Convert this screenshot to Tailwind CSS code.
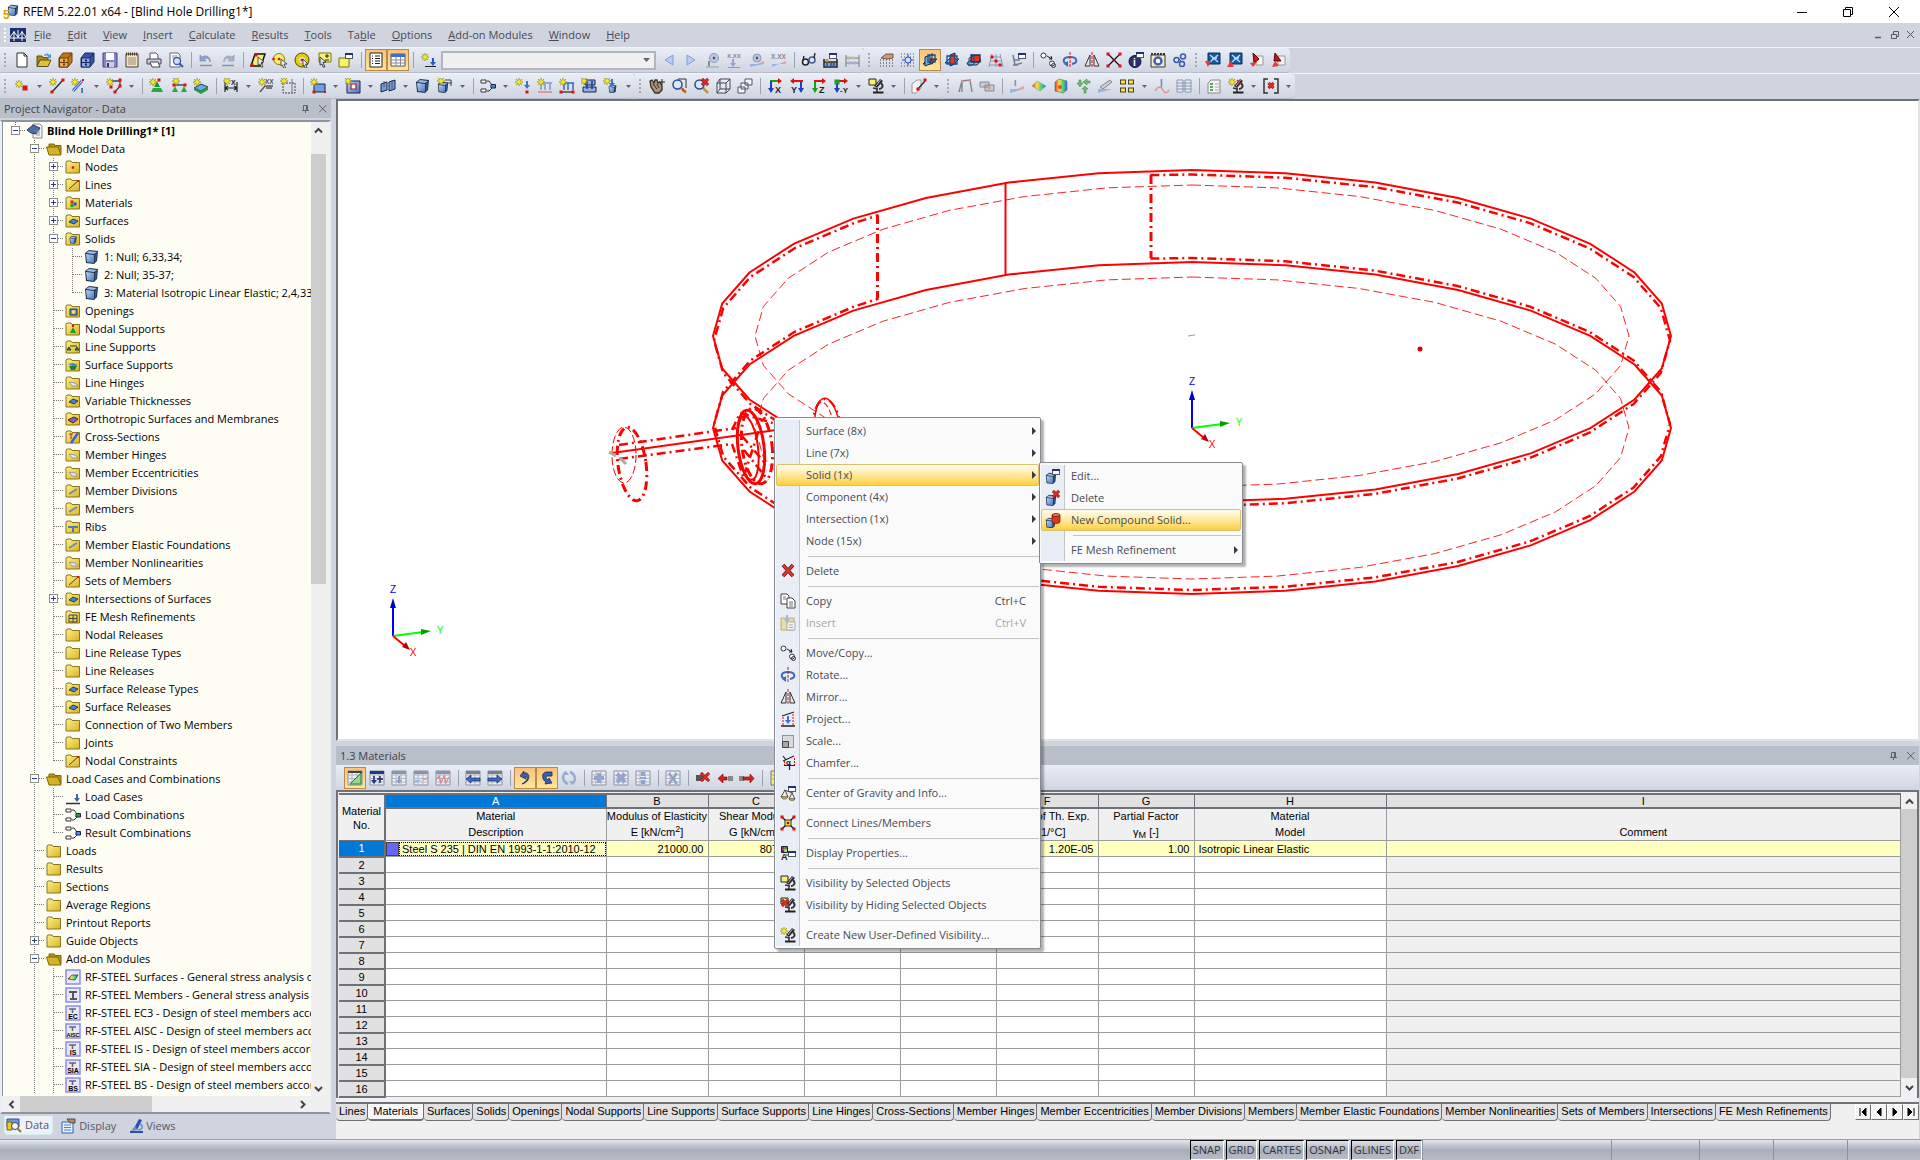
<!DOCTYPE html>
<html lang="en">
<head>
  <meta charset="UTF-8" />
  <meta name="viewport" content="width=device-width, initial-scale=1.0" />
  <title>RFEM 5.22.01 x64 - [Blind Hole Drilling1*]</title>
  <script src="https://cdn.jsdelivr.net/npm/@tailwindcss/browser@4"></script>
</head>
<body class="h-screen flex flex-col overflow-hidden bg-[#cfd4de] font-['Open_Sans',sans-serif] text-[11px] leading-4 text-[#3f434c] cursor-default">

  <!-- shared gradients -->
  <svg class="absolute size-0" aria-hidden="true">
    <defs>
      <linearGradient id="gFolder" x1="0" y1="0" x2="1" y2="1"><stop offset="0" stop-color="#fff08a" /><stop offset="1" stop-color="#d9b422" /></linearGradient>
      <linearGradient id="gBlue" x1="0" y1="0" x2="1" y2="1"><stop offset="0" stop-color="#b9d2f5" /><stop offset="1" stop-color="#4a78bd" /></linearGradient>
      <linearGradient id="gGrey" x1="0" y1="0" x2="1" y2="1"><stop offset="0" stop-color="#ffffff" /><stop offset="1" stop-color="#a9abb5" /></linearGradient>
      <linearGradient id="gHeat" x1="0" y1="0" x2="1" y2="0"><stop offset="0" stop-color="#e33" /><stop offset=".35" stop-color="#fd4" /><stop offset=".65" stop-color="#4d6" /><stop offset="1" stop-color="#36e" /></linearGradient>
    </defs>
  </svg>

  <!-- === TITLE BAR === -->
  <header class="h-[23px] shrink-0 bg-white flex items-center px-[3px] text-[12px] text-black">
    <span data-icon="app" class="flex"></span>
    <h1 class="ml-1 flex-1 text-[12px] font-normal whitespace-nowrap" id="window-title">RFEM 5.22.01 x64 - [Blind Hole Drilling1*]</h1>
    <div class="flex">
      <button aria-label="Minimize" class="w-[46px] h-[22px] flex items-center justify-center"><svg viewBox="0 0 10 10" class="size-[10px]"><path d="M0 5.5H10" stroke="#000" /></svg></button>
      <button aria-label="Restore" class="w-[46px] h-[22px] flex items-center justify-center"><svg viewBox="0 0 10 10" class="size-[10px]"><path d="M.5 2.5H7.5V9.5H.5ZM2.5 2V.5H9.5V7.5H8" fill="none" stroke="#000" /></svg></button>
      <button aria-label="Close" class="w-[46px] h-[22px] flex items-center justify-center"><svg viewBox="0 0 10 10" class="size-[10px]"><path d="M0 0L10 10M10 0L0 10" stroke="#000" /></svg></button>
    </div>
  </header>

  <!-- === MENU BAR === -->
  <nav class="h-6 shrink-0 flex items-center pl-1" aria-label="Main menu">
    <svg viewBox="0 0 3 14" class="w-[3px] h-[14px]"><path d="M1 0V14" stroke="#fff" stroke-width="2" stroke-dasharray="2 2" /></svg>
    <span data-icon="mdi" class="flex ml-[3px]"></span>
    <div id="menubar" class="flex flex-1"></div>
    <div class="flex pr-px">
      <button aria-label="Minimize document" class="w-4 h-4 flex items-center justify-center"><svg viewBox="0 0 8 8" class="size-2"><path d="M0 6.5H6" stroke="#555a66" stroke-width="1.5" /></svg></button>
      <button aria-label="Restore document" class="w-4 h-4 flex items-center justify-center"><svg viewBox="0 0 8 8" class="size-2"><path d="M.5 3.5H5.5V7.5H.5ZM2.5 3V.5H7.5V5.5H6" fill="none" stroke="#555a66" /></svg></button>
      <button aria-label="Close document" class="w-4 h-4 flex items-center justify-center"><svg viewBox="0 0 8 8" class="size-2"><path d="M0 0L7 7M7 0L0 7" stroke="#555a66" /></svg></button>
    </div>
  </nav>

  <!-- === TOOLBARS === -->
  <div id="toolbar-1" class="h-[26px] shrink-0 flex border-t border-[#f1f3f8]"></div>
  <div id="toolbar-2" class="h-[26px] shrink-0 flex border-t border-[#f1f3f8]"></div>

  <!-- === WORK AREA === -->
  <main class="flex-1 min-h-0 flex">

    <!-- Project navigator -->
    <aside class="w-[332px] shrink-0 flex flex-col">
      <div class="h-[19px] shrink-0 bg-[#b9bfc9] flex items-center pl-1 mr-[1px]">
        <h2 class="flex-1">Project Navigator - Data</h2>
        <button aria-label="Pin" class="w-[17px] h-4 flex items-center justify-center"><svg viewBox="0 0 8 8" class="size-2"><path d="M1.5 5V.5H5.5V5M0 5.500H7M3.500 5V8M4.500 1V5" fill="none" stroke="#5c6270" /></svg></button>
        <button aria-label="Close" class="w-[17px] h-4 flex items-center justify-center"><svg viewBox="0 0 8 8" class="size-2"><path d="M0 0L7.500 7.500M7.500 0L0 7.500" stroke="#5c6270" /></svg></button>
      </div>
      <div class="flex-1 min-h-0 border-2 border-[#8f939c] border-l-[#e9edf6] border-r-[#e9edf6] bg-[#f0f0f0] flex flex-col mt-[2px] mr-[1px] mb-px">
        <div class="flex-1 min-h-0 flex">
          <ul id="tree" class="flex-1 min-w-0 overflow-hidden bg-[#fdfdf4] border-l border-[#8f939c] text-black pl-[3px]"></ul>
          <div class="w-[18px] shrink-0 flex flex-col bg-[#f0f0f0] pr-[3px]">
            <button aria-label="Scroll up" class="h-8 pt-1 flex justify-center"><svg viewBox="0 0 9 9" class="size-[9px]"><path d="M1 6.500L4.500 3L8 6.500" fill="none" stroke="#444" stroke-width="2" /></svg></button>
            <div class="h-[430px] bg-[#cdcdcd]"></div>
            <div class="flex-1"></div>
            <button aria-label="Scroll down" class="h-4 flex items-center justify-center"><svg viewBox="0 0 9 9" class="size-[9px]"><path d="M1 3L4.500 6.500L8 3" fill="none" stroke="#444" stroke-width="2" /></svg></button>
          </div>
        </div>
        <div class="h-4 shrink-0 flex pr-[18px]">
          <button aria-label="Scroll left" class="w-[18px] flex items-center justify-center"><svg viewBox="0 0 9 9" class="size-[9px]"><path d="M6.500 1L3 4.500L6.500 8" fill="none" stroke="#444" stroke-width="2" /></svg></button>
          <div class="w-[132px] bg-[#cdcdcd]"></div>
          <div class="flex-1"></div>
          <button aria-label="Scroll right" class="w-[18px] flex items-center justify-center"><svg viewBox="0 0 9 9" class="size-[9px]"><path d="M3 1L6.500 4.500L3 8" fill="none" stroke="#444" stroke-width="2" /></svg></button>
        </div>
      </div>
      <div class="h-6 shrink-0 flex items-start pl-1 pt-[1px] gap-1 text-[#555a66]">
        <button class="h-[19px] pl-[1px] pr-[3px] flex items-center gap-[3px] bg-[#eef1f6] border border-t-0 border-[#d5ecef] rounded-b"><span data-icon="tabData"></span>Data</button>
        <button class="h-[19px] px-[3px] flex items-center gap-[3px]"><span data-icon="tabDisplay"></span>Display</button>
        <button class="h-[19px] px-[3px] ml-[3px] flex items-center gap-[1px]"><span data-icon="tabViews"></span>Views</button>
      </div>
    </aside>

    <section class="flex-1 min-w-0 flex flex-col pl-1">
      <!-- Model view -->
      <div class="flex-1 min-h-0 bg-white border-2 border-[#6e7178] border-r-[#e3e3e3] border-b-[#e3e3e3] overflow-hidden">
        <svg id="model" class="w-full h-full" role="img" aria-label="Model view"></svg>
      </div>

      <!-- Materials table -->
      <div class="h-[393px] shrink-0 mt-[5px] flex flex-col bg-[#f0f0f0] mr-[1px]">
        <div class="h-[19px] shrink-0 bg-[#b9bfc9] flex items-center pl-1">
          <h2 class="flex-1">1.3 Materials</h2>
          <button aria-label="Pin table" class="w-[17px] h-4 flex items-center justify-center"><svg viewBox="0 0 8 8" class="size-2"><path d="M1.5 5V.5H5.5V5M0 5.500H7M3.500 5V8M4.500 1V5" fill="none" stroke="#5c6270" /></svg></button>
          <button aria-label="Close table" class="w-[17px] h-4 flex items-center justify-center"><svg viewBox="0 0 8 8" class="size-2"><path d="M0 0L7.500 7.500M7.500 0L0 7.500" stroke="#5c6270" /></svg></button>
        </div>
        <div id="toolbar-3" class="h-[25px] shrink-0 flex items-center pl-2 bg-linear-to-b from-[#e9edf6] to-[#cfd5e0]"></div>
        <div class="flex border-2 border-b-0 border-[#6e7178] pt-[1px] pl-[1px] font-['Liberation_Sans',sans-serif] text-black">
          <table class="flex-1 w-full table-fixed border-collapse">
            <colgroup>
              <col class="w-[46px]" /><col class="w-[221px]" /><col class="w-[102px]" /><col class="w-24" /><col class="w-24" />
              <col class="w-24" /><col class="w-[102px]" /><col class="w-24" /><col class="w-48" /><col />
            </colgroup>
            <thead id="grid-head"></thead>
            <tbody id="grid-body"></tbody>
          </table>
          <div class="w-4 shrink-0 flex flex-col">
            <button aria-label="Table scroll up" class="h-4 flex items-center justify-center"><svg viewBox="0 0 9 9" class="size-[9px]"><path d="M1 6.500L4.500 3L8 6.500" fill="none" stroke="#444" stroke-width="2" /></svg></button>
            <div class="flex-1 bg-[#cdcdcd]"></div>
            <button aria-label="Table scroll down" class="h-5 flex items-center justify-center"><svg viewBox="0 0 9 9" class="size-[9px]"><path d="M1 3L4.500 6.500L8 3" fill="none" stroke="#444" stroke-width="2" /></svg></button>
          </div>
        </div>
        <div class="mt-1 flex items-start border-t-2 border-[#6e7178] font-['Liberation_Sans',sans-serif] text-black">
          <div id="sheet-tabs" class="flex flex-1 min-w-0 overflow-hidden" role="tablist"></div>
          <div id="sheet-nav" class="flex"></div>
        </div>
      </div>
    </section>
  </main>

  <!-- === STATUS BAR === -->
  <footer class="h-[21px] shrink-0 flex justify-end items-stretch border-t border-[#9a9fab] bg-linear-to-b from-[#e4e6ec] via-[#a9afba] to-[#b7bcc6] text-[#30343c]">
    <div id="status" class="flex items-stretch gap-[2px]"></div>
    <div class="w-[189px] border-l border-[#8c919c]"></div>
    <div class="w-[88px] border-l border-[#8c919c]"></div>
    <div class="w-[74px] border-l border-[#8c919c]"></div>
    <div class="w-[74px] border-l border-[#8c919c]"></div>
    <div class="w-[73px] border-l border-[#8c919c]"></div>
  </footer>

  <!-- === CONTEXT MENUS === -->
  <ul id="context-menu" role="menu" class="absolute left-[774px] top-[417px] w-[267px] py-[2px] border border-[#868a91] rounded-[2px] bg-[#fafafa] shadow-[3px_3px_2px_rgba(0,0,0,0.3)]"></ul>
  <ul id="solid-menu" role="menu" class="absolute left-[1039px] top-[462px] w-[204px] py-[2px] border border-[#868a91] rounded-[2px] bg-[#fafafa] shadow-[3px_3px_2px_rgba(0,0,0,0.3)]"></ul>

  <script>
    // ---- icon parts (16 x 16 grid) ----
    const p = (d, fill, stroke, w) => `<path d="${d}" fill="${fill || "none"}" stroke="${stroke || "none"}" stroke-width="${w || 1}"/>`;
    const dashed = (d, c, dash, fill, w) => `<path d="${d}" fill="${fill || "none"}" stroke="${c}" stroke-width="${w || 1}" stroke-dasharray="${dash}"/>`;
    const dot = (x, y, c, r) => `<rect x="${x - (r || 1.500)}" y="${y - (r || 1.500)}" width="${2 * (r || 1.500)}" height="${2 * (r || 1.500)}" fill="${c || "#e01010"}"/>`;
    const star = (x, y) => `<g transform="translate(${x} ${y})">` + p("M0-4L1-1.500L3-3L1.500-1L4 0L1.500 1L3 3L1 1.500L0 4L-1 1.500L-3 3L-1.500 1L-4 0L-1.500-1L-3-3L-1-1.500Z", "#f5ec20", "#8a8420", .5) + `</g>`;
    const txt = (x, y, s, t, c) => `<text x="${x}" y="${y}" font-size="${s}" fill="${c || "#222"}" font-family="Liberation Sans" font-weight="bold">${t}</text>`;
    const cube = (x, y, s) => `<g transform="translate(${x} ${y}) scale(${s || 1})">` + p("M1 4L5 1L14 2L13 12L10 15L2 14Z", "#1f3350") + p("M2 5L10 6V14L3 13Z", "url(#gBlue)") + p("M2 4L5 2L13 3L10 5Z", "#9dbce8") + p("M11 6L13 4L12 12L11 13Z", "#35598f") + `</g>`;
    const win = (x, y) => `<rect x="${x + .5}" y="${y + .5}" width="7" height="5" fill="#fff" stroke="#555"/><rect x="${x}" y="${y}" width="8" height="2" fill="#22307a"/>`;
    const mag = p("M10 10L15 15", "", "#c89040", 2.500) + `<circle cx="6.500" cy="6.500" r="4.500" fill="#dce9fb" stroke="#2a4a98" stroke-width="1.500"/>`;
    const folder = inner => p("M1 3L2 2H6L7 3.500H14.500V14H1Z", "url(#gFolder)", "#8a7420") + (inner || "");
    const grid = p("M1 1H15V15H1Z", "#eef0f5", "#8a8f9c") + p("M1 5H15M1 8.500H15M1 12H15M5 1V15M10 1V15", "", "#b0b4c0");
    const downArrow = (x, y, c) => p(`M${x - 1} ${y}H${x + 1}V${y + 4}H${x + 3}L${x} ${y + 8}L${x - 3} ${y + 4}H${x - 1}Z`, c || "#3f72c8");
    const redX = (x, y, s) => p(`M${x} ${y}L${x + s} ${y + s}M${x + s} ${y}L${x} ${y + s}`, "", "#7c1010", 3) + p(`M${x} ${y}L${x + s} ${y + s}M${x + s} ${y}L${x} ${y + s}`, "", "#e02a20", 2);
    const scope = p("M12 1L15 3L9 10L6 8Z", "#2c2c2c") + p("M12.500 2L8 8", "", "#bbb") + p("M13 5C16 8 14 11 11 11", "", "#333", 2) + p("M5 10L10 11M9 11V14", "", "#333", 1.500) + p("M5 13.500H15.500V15.500H5Z", "#222");
    const module = (label, art) => `<rect x="1" y="1" width="14" height="14" fill="#e8e8f2" stroke="#8b8bf5" stroke-width="1.500"/>` + (art || p("M4 4H11M7.500 4V8", "", "#667", 1.500)) + (label ? `<text x="8" y="14" text-anchor="middle" font-size="${label.length > 3 ? 5.500 : 7}" font-family="Liberation Sans" font-weight="bold">${label}</text>` : "");
    const combo = c => p("M1 2H6V5H1ZM1 11H6V14H1Z", "#fff", "#333") + p("M7 3H9L12 7M7 13H9L12 10", "", "#333") + p("M11 6.500H15.500V10H11Z", c, "#224");
    const support = p("M8 3L11 9H5Z", "#1e9a30") + p("M4 10H12L14 14H2Z", "#2aa83c");

    const icons = {
      app: cube(4, 0, .8) + txt(0, 15, 12, "5", "#d8a000"),
      mdi: `<rect width="16" height="14" y="1" fill="#1c2f6e"/>` + p("M0 11H16M4 4V14M12 4V14M0 10L4 5L8 10L12 5L16 10M8 3V11", "", "#fff"),
      newDoc: p("M3 1H10L13 4V15H3Z", "#fff", "#333") + p("M10 1V4H13", "", "#333"),
      open: p("M1 4H6L7 5.500H12V14H1Z", "#a58a18", "#5e5010") + p("M4 8H15L12 14.500H1Z", "#ddc040", "#5e5010") + p("M8 4C9 1 12 1 13 3L15 2V6H11L12 4.500C11 3 10 3 9 4Z", "#46a0d8"),
      boxOrange: p("M1 6L5 1H14V10L10 15H1Z", "#c07818", "#6b3c08") + p("M1.500 6H10V15H1.500Z", "#efae55", "#6b3c08") + p("M10 6L14 1M2 10.500H10", "", "#6b3c08") + dot(6, 8.500, "#6b3c08", 1) + dot(6, 12.500, "#6b3c08", 1),
      boxBlue: p("M1 6L5 1H14V10L10 15H1Z", "#3555a8", "#1a2a60") + p("M1.500 6H10V15H1.500Z", "#8aa8ea", "#1a2a60") + p("M10 6L14 1M2 10.500H10", "", "#1a2a60") + dot(6, 8.500, "#1a2a60", 1) + dot(6, 12.500, "#1a2a60", 1),
      save: p("M1 1H15V15H1Z", "#8585c8", "#44447f") + `<rect x="4" y="1" width="8" height="7" fill="#fff"/><rect x="4" y="10" width="8" height="5" fill="#cfcfe4"/><rect x="5" y="11" width="2" height="4" fill="#33337a"/>`,
      note: p("M2 2H14V15H2Z", "#efe3c8", "#4a3a28") + dashed("M2 2H14", "#4a3a28", "1 1", "", 3) + p("M4 6H12M4 8H12M4 10H12M4 12H12", "", "#a08a6a"),
      print: p("M4 7V1H10L12 3V7", "#fff", "#556") + p("M1 7H15V12H1Z", "#c9cbdc", "#445") + p("M4 10H12L14 15H6Z", "#fff", "#445"),
      preview: p("M2 1H10L12 3V15H2Z", "#fff", "#666") + p("M4 4H9M4 6H9", "", "#999") + `<circle cx="9" cy="9" r="3.500" fill="#cfe2fb" stroke="#345fa8" stroke-width="1.300"/>` + p("M11.500 11.500L15 15", "", "#345fa8", 2),
      undo: p("M2 3V9H8L6 7C9 5 12 7 12 10C13 6 9 2 4 5Z", "#8fa6cc", "#6b80a8", .6) + p("M2 13.500H14", "", "#8a94a8", 1.500),
      redo: p("M14 3V9H8L10 7C7 5 4 7 4 10C3 6 7 2 12 5Z", "#a9b3c6", "#8a95aa", .6) + p("M2 13.500H14", "", "#8a94a8", 1.500),
      selQuad: p("M5 2H15L11 14H1Z", "#f8f06a", "#111", 1.500) + dot(2, 13) + dot(6, 3) + p("M8 5L14 10L11 10.500L13 15L11 15L10 12L8 13Z", "#eee", "#333", .8),
      selCircle: `<circle cx="7" cy="7" r="5.500" fill="#f8f06a" stroke="#8a8000"/>` + dot(7, 7, 0, 1.200) + dot(1.500, 7, 0, 1.200) + p("M9 7L15 12L12 12L13.500 16L11.500 16L10.500 13L9 14Z", "#eee", "#333", .8),
      selRing: `<circle cx="8" cy="8" r="5" fill="none" stroke="#e0cc10" stroke-width="4"/><circle cx="8" cy="8" r="7" fill="none" stroke="#554c00"/>` + dot(8, 8, 0, 1.200) + p("M9 7L14 12L11.500 12L13 16L11 16L10 13L9 14Z", "#eee", "#333", .8),
      selPlus: p("M3 1H15V10H3Z", "#f8f06a", "#7a7410") + p("M9 4H13M11 2V6M9 8H13", "", "#222") + p("M4 5L10 10L7 10.500L9 15L7 15L6 12L4 13Z", "#ddd", "#222", .8),
      selWin: p("M1 6H11V15H1Z", "#f8f06a", "#7a7410") + win(7, 1),
      navPanel: p("M2 1H14V15H2Z", "#fff", "#222") + p("M7 4H12M7 6.500H12M7 9H12M7 11.500H12M4 4H5M4 6.500H5M4 9H5M4 11.500H5", "", "#222", 1.200),
      tblPanel: p("M1 2H15V14H1Z", "#fff", "#556") + p("M1 2H15V5H1Z", "#3e6fc0") + p("M1 8H15M1 11H15M6 5V14M10.500 5V14", "", "#889"),
      loadStar: star(5, 5) + downArrow(13, 6, "#2a58c0") + p("M5 14.500H16", "", "#222"),
      left: p("M12 3V13L4 8Z", "#b9cdf2", "#7f9fdc"), right: p("M4 3V13L12 8Z", "#b9cdf2", "#7f9fdc"),
      resA: p("M4 14V9", "", "#888", 2) + `<circle cx="9" cy="6" r="4.500" fill="#b8c8ea" stroke="#8c98b0"/>` + dot(9, 6, "#556", 1.200) + p("M1 15H14", "", "#999"),
      resB: txt(0, 6, 6, "X.XX", "#888") + downArrow(6, 7, "#8fa6d8") + p("M1 15.500H13", "", "#999"),
      resC: `<circle cx="8" cy="6" r="4" fill="#b8c8ea" stroke="#8c98b0"/>` + dot(8, 6, "#556", 1.200) + p("M1 12H15L1 15Z", "#9db2e4") + p("M8 12H15V9Z", "#e9a0a0"),
      resD: txt(0, 7, 6.500, "X.XX", "#888") + p("M1 12H15M1 12V15L8 12", "#9db2e4") + p("M8 12H15V9Z", "#e9a0a0"),
      glasses: `<circle cx="4.500" cy="10" r="3" fill="#dfe6f2" stroke="#222" stroke-width="1.500"/><circle cx="11" cy="8" r="3" fill="#dfe6f2" stroke="#445a90" stroke-width="1.500"/>` + p("M2 8L3 4M13 6L14 1", "", "#222", 1.300),
      abacus: p("M1 7V15H14V7M1 10H14", "", "#222", 1.500) + dot(4, 12.500, "#3b62c0") + dot(8, 12.500, "#3b62c0") + dot(11, 12.500, "#3b62c0") + dot(4, 8.500, "#c09820") + win(6, 1),
      abacus2: p("M1 3V15M14 3V15M1 6H14M1 11H14", "", "#999", 1.500) + dot(4, 6, "#a9c3a0") + dot(8, 6, "#c9c090") + dot(5, 11, "#9db2e4") + dot(10, 11, "#9db2e4"),
      gridHand: dashed("M2 8H15M2 11H15M2 14H15", "#333", "1 2", "", 1.200) + p("M3 6L8 2H15V6L9 7Z", "#c99c78", "#553a28", .8),
      gridSnap: dashed("M1 2H15M1 5H15M1 11H15M1 14H15", "#555", "1 2") + p("M8 2V14M2 8H14", "", "#2a4ac0") + `<circle cx="8" cy="8" r="3" fill="#cfdcff" stroke="#2a4ac0"/>`,
      planeA: p("M1 12L6 7H15L10 12Z", "#f03020", "#12305c") + p("M3 5L8 3V12L3 14Z", "#78a8e0", "#12305c") + p("M6 3H13V10H6Z", "none", "#12508c", 1.300) + p("M10 1V9", "", "#12305c"),
      planeB: p("M1 11L5 7H15L11 11Z", "#88b8f0", "#12305c") + p("M6 3L11 1V12L6 14Z", "#e03a2a", "#12305c") + p("M3 4H13V12H3Z", "none", "#12508c", 1.300),
      planeC: p("M1 11L5 8H15L11 13H2Z", "#88b8f0", "#12305c") + p("M5 3H14V10H5Z", "#e83020", "#12305c", 1.300) + p("M3 6L8 4V12L3 14Z", "none", "#12508c"),
      lineGrid: p("M4 2L1 15M8 2V15M12 2L15 15M3 5H13M2 9H14M1 13H15", "", "#8a99b8") + dot(8, 9) + dot(4, 5) + dot(12, 13),
      treeWin: p("M3 3L5 13L12 11M3 13H8M4 8H10", "", "#6f7f9f", 1.500) + win(8, 1),
      move: `<circle cx="3.500" cy="3.500" r="2.500" fill="#fff" stroke="#333"/><circle cx="12" cy="11.500" r="2.500" fill="#fff" stroke="#333"/><circle cx="13.500" cy="13.500" r="2" fill="none" stroke="#333"/>` + p("M7 4L12 7M12 7L11 4M12 7L9 7", "", "#222"),
      rotate: p("M6 12C0 11 0 5 8 5S16 11 10 12", "", "#3f68b8", 2) + p("M6 9V15L2 12Z", "#3f68b8") + dashed("M8 0V16", "#e01010", "3 1"),
      mirror: p("M6 3V14H1Z", "#e8e8e8", "#333") + p("M10 3V14H15Z", "#e8e8e8", "#333") + dashed("M8 0V16", "#e01010", "3 1"),
      connect: p("M2 2L14 14M14 2L2 14", "", "#111", 1.300) + dot(2, 2) + dot(14, 2) + dot(2, 14) + dot(14, 14) + dot(8, 8, "#a00", 1.200),
      connectY: p("M2 2L14 14M14 2L2 14", "", "#111", 1.300) + dot(2, 2) + dot(14, 2) + dot(2, 14) + dot(14, 14) + `<rect x="5" y="5" width="6" height="6" fill="#ffe820" stroke="#333"/>` + dot(8, 8, "#a00", 1.200),
      info: `<circle cx="7" cy="9.500" r="6" fill="#28306e" stroke="#11163c"/>` + txt(5, 14, 10, "i", "#fff") + win(8, 0),
      gearDoc: p("M1 3H15V15H1Z", "#f2e8d2", "#3a342a") + dashed("M1 2H15", "#3a342a", "2 1", "", 2) + `<circle cx="8" cy="9" r="3.500" fill="#fff" stroke="#4460a8" stroke-width="2.500"/>`,
      gears: `<g fill="#dce4f8" stroke="#3a5aa8" stroke-width="1.500"><circle cx="4.500" cy="8" r="2.500"/><circle cx="11" cy="4.500" r="2.500"/><circle cx="10" cy="12" r="2.500"/></g>` + p("M7 7L9 9", "", "#3a5aa8"),
      calcDn: p("M3 1H15V12H3Z", "#155a9c", "#0b2f5c") + p("M5 3L13 10M13 3L5 10M7 6H12", "", "#bfe0ff", 1.300) + p("M0 9H6L3 15Z", "#e83a30"),
      calcUp: p("M3 1H15V12H3Z", "#155a9c", "#0b2f5c") + p("M5 3L13 10M13 3L5 10M7 6H12", "", "#bfe0ff", 1.300) + p("M0 15H7L3.500 9Z", "#e83a30"),
      expA: p("M7 4H14V13H7Z", "#f4f4f4", "#999") + p("M4 1L10 7L5 11Z", "#c01818", "#600") + p("M1 11L8 10L4 15Z", "#e83a30"),
      expB: p("M7 4H14V13H7Z", "#f4f4f4", "#999") + p("M4 1L10 9L3 9Z", "#c01818", "#600") + p("M1 15L4 9L8 14Z", "#e83a30"),

      node: star(5, 6) + dot(11, 10, 0, 2.500),
      line: p("M3 14L14 2", "", "#333", 1.500) + dot(3, 14) + dot(14, 2) + star(4, 4),
      member: p("M2 13L11 3", "", "#3a68c0", 3) + p("M2 13L11 3", "", "#cfe0ff") + star(4, 4) + dot(12, 2, 0, 1) + txt(10, 15, 7, "I"),
      polyline: p("M4 3H14V8L9 14", "", "#444", 1.300) + dot(5, 9) + dot(14, 2) + dot(14, 8) + dot(9, 14) + star(4, 4),
      supNode: support + dot(10, 2) + star(4, 4),
      supLine: p("M3 7H14", "", "#333", 1.300) + dot(3, 7) + dot(14, 7) + p("M4 8L7 14H1ZM13 8L16 14H10Z", "#2aa83c") + star(5, 3),
      supSurf: p("M1 10L8 6L15 9L8 13Z", "#6aa8e8", "#245") + p("M1 10L8 13L15 9V12L8 16L1 12Z", "#2a9a3a") + star(4, 4),
      dimen: p("M2 4V14M14 4V14M2 10H14M2 10L5 8M2 10L5 12M14 10L11 8M14 10L11 12", "", "#222", 1.200) + txt(8, 7, 7, "X") + star(4, 3),
      comment: txt(7, 6, 6.500, "XX", "#555") + p("M2 14L7 8H15M8 10H14", "", "#555", 1.300) + star(4, 4),
      guides: dashed("M3 5H15V15H3Z", "#444", "2 1") + p("M12 1V15", "", "#777") + star(4, 3),
      surf: p("M4 6H15V14H4Z", "#6aa0e0", "#224") + dot(4, 14) + dot(15, 14, 0, 1) + star(4, 4),
      opening: p("M2 3H15V15H2Z", "url(#gBlue)", "#224") + p("M6 6H11V11H6Z", "#fff", "#a02020", 1.200) + star(3, 3),
      sets: p("M1 6L7 4V12L1 14ZM9 4L15 2V11L9 13Z", "#6aa0e0", "#224") + p("M4 3V9M12 2V12", "", "#556"),
      solid: cube(0, 0),
      solidOff: cube(0, 3, .8) + p("M8 2H14V8M10 5H15", "", "#444") + star(4, 3),
      loads: combo("#3a8ae0"),
      ldNode: downArrow(12, 3) + star(4, 4) + dot(12, 14),
      ldMember: p("M2 5H15M4 5V12M8 5V12M13 5V12", "", "#90a8dc", 2) + p("M1 14H15", "", "#e08080", 1.500) + star(4, 4),
      ldLine: p("M4 5H15M5 5V12M9 5V12M14 5V12", "", "#3a68c8", 1.500) + p("M1 14H15", "", "#333", 1.300) + dot(2, 14) + dot(14, 14) + star(4, 4),
      ldSurf: p("M4 2H14V7H4ZM2 9H15V14H2Z", "#8ab4ea", "#224") + p("M6 3V11M11 3V11", "", "#1a3a90", 1.500) + star(3, 3),
      ldSolid: cube(5, 6, .6) + downArrow(9, 1) + star(4, 3),
      pan: p("M1 3L3 2L5 5L6 2L8 2L9 5L11 4L13 8V12L10 15H6L2 9Z", "#a89078", "#3a3028", 1.300) + p("M4 6L8 11M8 6L10 10", "", "#3a3028") + p("M13 1V7M10 4H16", "", "#222"),
      zoomWin: mag + p("M7 1H15V10", "", "#333") + p("M12 10V13H15", "", "#e01010"),
      zoomX: mag + redX(9, 1, 6),
      box: p("M2 5H11V15H2ZM5 1H15V11L11 15M2 5L5 1M11 5L15 1M5 1V11H15M2 15L5 11", "#e8edf8", "#445"),
      boxes: p("M8 1H15V7H8ZM4 5H11V11H4ZM1 9H8V15H1Z", "#f4f6fb", "#556"),
      viewX: p("M3 3H12", "", "#1aa01a", 2) + p("M15 3L11 0V6Z", "#e01010") + p("M4 3V12", "", "#2040c0", 2) + p("M1 10H7L4 15Z", "#2040c0") + txt(8, 15, 9, "X"),
      viewY: p("M4 3H14", "", "#e01010", 2) + p("M1 3L5 0V6Z", "#e01010") + p("M12 4V12", "", "#2040c0", 2) + p("M9 10H15L12 15Z", "#2040c0") + txt(2, 15, 9, "Y"),
      viewZ: p("M3 3H12", "", "#e01010", 2) + p("M15 3L11 0V6Z", "#e01010") + p("M4 4V12", "", "#1aa01a", 2) + p("M1 10H7L4 15Z", "#1aa01a") + txt(8, 15, 9, "Z"),
      viewMY: p("M5 3H12", "", "#e01010", 2) + p("M15 3L11 0V6Z", "#e01010") + dot(4, 4, "#1aa01a", 2.500) + p("M4 6V12", "", "#2040c0", 2) + p("M1 10H7L4 15Z", "#2040c0") + txt(7, 15, 8, "-Y"),
      visible: scope + p("M1 1H8V7H1Z", "#f8f06a", "#222"),
      clip: p("M1 6L6 2H10V10L5 15H1Z", "#f6f6f6", "#999") + p("M6 12L14 3", "", "#333", 1.500) + dot(14, 2) + dot(7, 11),
      deform: p("M2 14L5 3L13 2L15 14M5 3V14", "", "#888", 1.500) + dot(5, 3, "#e88", 1) + dot(13, 2, "#e88", 1),
      film: p("M1 4H10V9H1ZM6 7H15V13H6Z", "#c8ccd4", "#888") + dot(10, 10, "#d99", 1.500),
      resI: txt(5, 8, 9, "I", "#7888b0") + p("M1 11H15L1 15Z", "#9db2e4") + p("M8 11H15V8Z", "#e9a0a0"),
      resSurf: p("M1 8L6 3L15 8L9 13Z", "url(#gHeat)", "#88a", .5),
      resSolid: p("M2 4L6 1L14 3V12L10 15L2 13Z", "url(#gHeat)", "#668", .6) + `<circle cx="7" cy="9" r="2" fill="#e44"/>`,
      react: p("M4 2H6V5H8L5 9L2 5H4ZM8 4L12 1V3H15V5H12V7ZM9 15V11H7L10 8L13 11H11V15Z", "#6abf70", "#4a8a50", .6),
      stress: p("M3 9L13 2L15 4L6 11Z", "#c8ccd8", "#888") + p("M1 11H15L1 15Z", "#9db2e4"),
      panels: `<g fill="#f4e050" stroke="#4a4210"><rect x="1.500" y="2" width="5" height="4"/><rect x="9.500" y="2" width="5" height="4"/><rect x="1.500" y="10" width="5" height="4"/><rect x="9.500" y="10" width="5" height="4"/></g>`,
      sect: txt(6, 9, 10, "I", "#7888b0") + p("M1 13C4 8 7 8 9 12S14 15 15 12", "", "#e88a8a", 1.300),
      tbls: p("M1 2H7V14H1ZM9 2H15V14H9ZM1 5H15M1 8H15M1 11H15", "#e8ecf6", "#8a94b0"),
      legend: p("M5 2H14V15H2V5Z", "#f4f4f4", "#888") + p("M4 6H7M4 9H7M4 12H7", "", "#5aa85a", 2) + p("M9 6H13M9 9H13M9 12H13", "", "#aaa"),
      visNew: scope + star(4, 4) + p("M9 2L13 6", "", "#e01010", 1.500),
      exitX: p("M5 1H1V15H5M11 1H15V15H11", "", "#333", 1.500) + redX(5.500, 5, 5),

      // tree
      root: p("M6 1H13L15 3V15H6Z", "#f4f4f4", "#888") + p("M0 7L6 2L13 5L9 11L4 10Z", "#4a6ea8", "#2a3a5a") + p("M9 8H13M9 10H13M9 12H13", "", "#999"),
      openFolder: p("M3 3H8L9 4.500H15V13H3Z", "#b89410", "#806608") + p("M.500 6H12L15 14H3Z", "#d6b322", "#806608"), folder: folder(),
      fNode: folder(dot(8, 8.500, 0, 1.200)), fLine: folder(p("M4 12L13 4", "", "#5a4800") + dot(13, 4, 0, 1)),
      fMat: folder(dot(7, 7, "#e02020") + dot(10, 9, "#2050d0") + dot(7, 10.500, "#20a020")),
      fSurf: folder(p("M4 9L8 6L13 8L9 11Z", "#4a80d0", "#245")), fSolid: folder(cube(4, 4.500, .55)),
      fOpen: folder(p("M5 6H12V12H5Z", "#6a98d0", "#234") + dot(8.500, 9, "#ffe070", 1.500)),
      fSupN: folder(p("M8 6L11 12H5Z", "#1e9a30") + dot(8, 5, 0, 1)), fSupL: folder(p("M4 8L6 11H2ZM12 8L14 11H10ZM5 7H12", "#1e9a30", "#244")),
      fSupS: folder(p("M3 7L8 6L13 8L9 10Z", "#4a80d0") + p("M4 9H12L10 13H6Z", "#1e8030")), fHinge: folder(p("M4 7L10 8L13 11L7 11Z", "#e8e8e8", "#99a")),
      fOrtho: folder(p("M3 9L9 6L13 8L8 12Z", "#5a70d8", "#900")), fCross: folder(p("M6 14L13 4", "", "#3a60e0", 2.500) + p("M4 5H8M6 5V10", "", "#a22")),
      fMemb: folder(p("M4 11L12 6", "", "#7088b8", 2)), fRib: folder(p("M3 8H13M8 8V13", "", "#5878b0", 2)), fMesh: folder(p("M4 6H12V13H4ZM4 9.500H12M8 6V13", "", "#444")),
      loadCase: downArrow(12, 5, "#3f62b0") + p("M1 14.500H15", "", "#333", 1.500), loadCombo: combo("#1ca03c"), resultCombo: combo("#4a8ae8"),
      mSurf: module("", p("M3 10L7 6H13L10 11Z", "url(#gHeat)", "#333", .7)), mMemb: module("", p("M4 5H12M8 5V12M5 12H12", "", "#556", 2)),
      mEC: module("EC"), mAISC: module("AISC"), mIS: module("IS"), mSIA: module("SIA"), mBS: module("BS"),
      tabData: p("M1 2H13V10H1Z", "#6a98e0", "#2a50a0") + p("M1 5H6V13H1Z", "#f0c828", "#806000") + `<circle cx="9" cy="9" r="3.500" fill="#eef4ff" stroke="#444"/>` + p("M11.500 11.500L15 15", "", "#a07030", 2),
      tabDisplay: p("M2 4H13V15H2Z", "#e8f0fc", "#3060b0") + p("M4 7H11M4 9.500H11M4 12H11", "", "#4a80d8", 1.200) + p("M7 1H15V5H10Z", "#b98a68", "#333", .8),
      tabViews: p("M10 1L13 2L8 12H4Z", "#2a50b0") + p("M1 13H14V15H1Z", "#2a50b0") + p("M11 6C15 8 13 12 9 12", "", "#6a90d8", 1.500) + p("M2 13L6 8L9 12Z", "#6a8ad0"),

      // table toolbar
      tEdit: grid + p("M1 1H15V3H1Z", "#444") + p("M14 3V14H3Z", "#8ed88e", "#2a802a"), tDown: grid + p("M1 1H15V4H1Z", "#1a3a90") + p("M5 6V12M11 6V13M8 9H14", "", "#1a2a60", 1.500) + p("M2 10H8L5 14Z", "#1a3a90"),
      tArr: grid + p("M1 1H15V4H1Z", "#8a94b0") + downArrow(8, 6, "#8a9cc4"), tRes: grid + p("M1 1H15V4H1Z", "#8a94b0") + p("M2 13V10H9Z", "#9db2e4") + p("M9 10H15V6Z", "#e9a0a0"),
      tWave: grid + p("M1 1H15V4H1Z", "#8a94b0") + p("M1 10L4 6L6 13L9 6L11 13L14 7", "", "#d88a90", 1.300),
      tLeft: grid + p("M1 1H15V4H1Z", "#7a7f8c") + p("M1 9L6 5V8H15V11H6V13Z", "#3a6ac8", "#1a2a60", .7), tRight: grid + p("M1 1H15V4H1Z", "#7a7f8c") + p("M15 9L10 5V8H1V11H10V13Z", "#3a6ac8", "#1a2a60", .7),
      tBack: p("M6 3C14 1 14 12 5 14C12 10 11 6 8 7L9 9L3 6L7 1Z", "#3a60b0", "#1a2a50", .8), tGrab: p("M13 2H7C2 3 3 10 7 12L6 14L13 13L10 8L9 10C6 8 7 6 9 6H13Z", "#3a60b0", "#1a2a50", .8),
      tSync: p("M5 2C0 6 2 12 7 14M11 14C16 10 14 4 9 2", "", "#9aaccf", 2.500) + p("M5 1L8 5H3ZM11 15L8 11H13Z", "#9aaccf"),
      tPlus: grid + p("M8 3V13M3 8H13", "", "#92a4d0", 4), tMul: grid + p("M4 4L12 12M12 4L4 12", "", "#92a4d0", 4), tDiv: grid + dot(8, 4, "#92a4d0", 2) + dot(8, 12, "#92a4d0", 2) + p("M5 8H11", "", "#92a4d0", 2),
      tX: grid + p("M4 3L12 14M12 3L4 14", "", "#8a9cc4", 2), tDel: p("M1 5H9V11H1Z", "#555") + redX(6, 3, 8), tIns: p("M11 6H16V11H11Z", "#888") + p("M1 8.500L6 4V7H10V10H6V13Z", "#d82020", "#700", .6),
      tIns2: p("M0 6H5V11H0Z", "#888") + p("M15 8.500L11 4V7H4V10H11V13Z", "#d82020", "#700", .6), tYel: p("M2 1H14V15H2Z", "#f8f06a", "#777") + p("M2 5H14M2 9H14", "", "#aa9"),

      // context menu
      del: p("M3 2L13 13M13 2L3 13", "", "#6c1010", 3.500) + p("M3 2L13 13M13 2L3 13", "", "#e03a30", 2), copy: p("M1 1H7L9 3V11H1Z", "#fff", "#444") + p("M7 5H12L15 8V15H7Z", "#fff", "#444") + p("M3 4H6M3 6H6M9 9H13M9 11H13M9 13H13", "", "#777"),
      insert: p("M1 3H14V15H1Z", "#e6dca8", "#b8ad80") + p("M7 7H15V15H7Z", "#f4f4f4", "#aaa") + p("M9 10H13M9 12.500H13", "", "#9ab") + downArrow(7, 0, "#9db8e4"),
      project: p("M2 5L14 1", "", "#222", 1.300) + dashed("M3 6V14M13 3V14", "#e01010", "2 1") + downArrow(8, 5) + p("M1 15H15", "", "#222", 1.500),
      scale: dashed("M2.500 2.500H13.500V14.500H2.500Z", "#444", "1 1", "#d8dade") + p("M2.500 8.500H8.500V14.500H2.500Z", "#a4a8ae", "#444"),
      chamfer: p("M3 6L14 1M3 1L6 5M4 10.500H15M9.500 9V15", "", "#222", 1.200) + txt(6, 10, 8, "α") + dashed("M14.500 3V10M4.500 6V10", "#e01010", "2 1"),
      gravity: p("M5 5L1 12H8ZM12 8L9 14H15Z", "none", "#5a5030") + p("M1 12H8L6 14H3ZM9 14H15L13 16H11Z", "#e0c860", "#5a5030", .7) + p("M4 5L13 8M9 2V7", "", "#555", 1.300) + win(8, 1),
      display: dot(3, 3, "#e02020") + dot(6, 3, "#20a020") + dot(3, 6, "#2040d0") + dot(6, 6, "#e8d020") + p("M1.500 1.500H7.500V7.500H1.500Z", "none", "#222") + txt(1, 15, 9, "A") + p("M6 10H8", "", "#444") + win(8, 6),
      visHide: scope + p("M1 1H8V7H1Z", "#f8f06a", "#222") + redX(2, 3, 6),
      visUser: scope + star(4, 4),
      sEdit: cube(0, 4, .8) + win(7, 1), sDel: cube(0, 4, .8) + redX(8, 1, 6),
      sComp: cube(0, 5, .75) + p("M7 3V10C8 12 14 12 15 10V3Z", "#d83a20", "#601008", .7) + `<ellipse cx="11" cy="3" rx="4" ry="1.500" fill="#f07850" stroke="#601008" stroke-width=".7"/>`
    };
    const icon = name => `<svg viewBox="0 0 16 16" class="size-4 shrink-0" aria-hidden="true">${icons[name]}</svg>`;
    document.querySelectorAll("[data-icon]").forEach(el => el.innerHTML = icon(el.dataset.icon));

    // ---- menu bar ("&" marks the access key) ----
    document.getElementById("menubar").innerHTML = ["&File", "&Edit", "&View", "&Insert", "&Calculate", "&Results", "&Tools", "Ta&ble", "&Options", "&Add-on Modules", "&Window", "&Help"]
      .map(t => `<button class="px-2 text-[#474b55]">${t.replace(/&(.)/, '<span class="underline">$1</span>')}</button>`).join("");

    // ---- toolbars: "|" separator, "::" new band, "name*" pressed, "name>" with drop-down ----
    const bandClass = "flex items-center bg-linear-to-b from-[#e9edf6] to-[#cfd5e0] rounded-r border-b border-[#b7bcc8]";
    const grip = `<span class="w-[11px] pl-1 flex shrink-0"><svg viewBox="0 0 3 16" class="w-[3px] h-4"><path d="M1 1V15" stroke="#a4a9b6" stroke-width="2" stroke-dasharray="2 2"/></svg></span>`;
    function tool(t) {
      if (t === "|") return `<span class="w-2 shrink-0 flex justify-center"><i class="w-px h-4 bg-[#9da2b0]"></i></span>`;
      if (t === "combo") return `<select aria-label="Load case" class="w-[215px] h-[19px] mx-[2px] px-1 border-2 border-[#b2b5bd] bg-[#f0f0f0] appearance-none bg-[url('data:image/svg+xml,%3Csvg%20xmlns=%22http://www.w3.org/2000/svg%22%20width=%227%22%20height=%224%22%3E%3Cpath%20d=%22M0%200h7L3.500%204z%22%20fill=%22%23666%22/%3E%3C/svg%3E')] bg-no-repeat bg-[right_4px_center]"><option></option></select>`;
      const name = t.replace(/[*>]/g, "");
      const cls = t.includes("*") ? "w-[22px] h-[22px] shrink-0 flex items-center justify-center border border-[#b98a4a] bg-linear-to-b from-[#fbc179] to-[#fde79a]" : "w-[22px] h-[22px] shrink-0 flex items-center justify-center";
      let html = `<button aria-label="${name}" class="${cls}">${icon(name)}</button>`;
      if (t.includes(">")) html += `<button aria-label="${name} options" class="w-[13px] h-[22px] shrink-0 flex items-center justify-center"><svg viewBox="0 0 5 3" class="w-[5px] h-[3px]"><path d="M0 0H5L2.500 3Z" fill="#666"/></svg></button>`;
      return html;
    }
    const bands = s => s.split(" :: ").map(b => `<div class="${bandClass}">${grip}${b.split(" ").map(tool).join("")}</div>`).join("");
    document.getElementById("toolbar-1").innerHTML = bands("newDoc open boxOrange boxBlue save note print preview | undo redo | selQuad selCircle selRing selPlus selWin | navPanel* tblPanel* | loadStar combo left right resA resB resC resD | glasses abacus abacus2 :: gridHand gridSnap planeA* planeB planeC lineGrid treeWin | move rotate mirror connect info gearDoc gears :: calcDn calcUp expA expB");
    document.getElementById("toolbar-2").innerHTML = bands("node> line member> polyline> | supNode supLine supSurf | dimen> comment guides | surf> opening> sets> solid solidOff> | loads> ldNode ldMember ldLine ldSurf ldSolid> :: pan zoomWin zoomX box boxes | viewX viewY viewZ viewMY> visible> | clip> :: deform film | resI resSurf resSolid react stress panels> sect tbls | legend visNew> exitX>");
    document.getElementById("toolbar-3").innerHTML = "tEdit* tDown tArr tRes tWave | tLeft tRight | tBack* tGrab* tSync | tPlus tMul tDiv | tX | tDel tIns tIns2 | tYel".split(" ").map(tool).join("");

    // ---- navigator tree: [level, icon, label, expander] ----
    const nodes = [
      [0, "root", "Blind Hole Drilling1* [1]", "-"], [1, "openFolder", "Model Data", "-"],
      [2, "fNode", "Nodes", "+"], [2, "fLine", "Lines", "+"], [2, "fMat", "Materials", "+"], [2, "fSurf", "Surfaces", "+"], [2, "fSolid", "Solids", "-"],
      [3, "solid", "1: Null; 6,33,34;"], [3, "solid", "2: Null; 35-37;"], [3, "solid", "3: Material Isotropic Linear Elastic; 2,4,33"],
      [2, "fOpen", "Openings"], [2, "fSupN", "Nodal Supports"], [2, "fSupL", "Line Supports"], [2, "fSupS", "Surface Supports"], [2, "fHinge", "Line Hinges"],
      [2, "fSurf", "Variable Thicknesses"], [2, "fOrtho", "Orthotropic Surfaces and Membranes"], [2, "fCross", "Cross-Sections"], [2, "fHinge", "Member Hinges"],
      [2, "fHinge", "Member Eccentricities"], [2, "fMemb", "Member Divisions"], [2, "fMemb", "Members"], [2, "fRib", "Ribs"], [2, "fMemb", "Member Elastic Foundations"],
      [2, "fHinge", "Member Nonlinearities"], [2, "fLine", "Sets of Members"], [2, "fSurf", "Intersections of Surfaces", "+"], [2, "fMesh", "FE Mesh Refinements"],
      [2, "folder", "Nodal Releases"], [2, "folder", "Line Release Types"], [2, "folder", "Line Releases"], [2, "fSurf", "Surface Release Types"], [2, "fSurf", "Surface Releases"],
      [2, "folder", "Connection of Two Members"], [2, "folder", "Joints"], [2, "fLine", "Nodal Constraints"],
      [1, "openFolder", "Load Cases and Combinations", "-"], [2, "loadCase", "Load Cases"], [2, "loadCombo", "Load Combinations"], [2, "resultCombo", "Result Combinations"],
      [1, "folder", "Loads"], [1, "folder", "Results"], [1, "folder", "Sections"], [1, "folder", "Average Regions"], [1, "folder", "Printout Reports"], [1, "folder", "Guide Objects", "+"],
      [1, "openFolder", "Add-on Modules", "-"], [2, "mSurf", "RF-STEEL Surfaces - General stress analysis of steel surfaces"], [2, "mMemb", "RF-STEEL Members - General stress analysis of steel members"],
      [2, "mEC", "RF-STEEL EC3 - Design of steel members according to Eurocode 3"], [2, "mAISC", "RF-STEEL AISC - Design of steel members according to AISC"],
      [2, "mIS", "RF-STEEL IS - Design of steel members according to IS"], [2, "mSIA", "RF-STEEL SIA - Design of steel members according to SIA"], [2, "mBS", "RF-STEEL BS - Design of steel members according to BS"]
    ];
    function hasNext(i, level) {
      for (let j = i + 1; j < nodes.length; j++) {
        if (nodes[j][0] < level) return false;
        if (nodes[j][0] === level) return true;
      }
      return level > 0;
    }
    function guide(d, box) {
      const sign = box ? `<rect x="5.500" y="4.500" width="8" height="8" fill="#fff" stroke="#8c8c8c"/><path d="M7 8.500H12${box === "+" ? "M9.500 6V11" : ""}" stroke="#2a3f8c"/>` : "";
      return `<svg viewBox="0 0 19 18" class="w-[19px] h-[18px] shrink-0"><path d="${d}" stroke="#777" stroke-dasharray="1 1"/>${sign}</svg>`;
    }
    document.getElementById("tree").innerHTML = nodes.map(([level, ic, label, box], i) => {
      let cells = "";
      for (let l = 0; l < level; l++) cells += guide(hasNext(i, l) ? "M9.500 0V18" : "", "");
      const own = guide((hasNext(i, level) ? "M9.500 0V18" : "M9.500 0V9") + "M10 8.500H19", box);
      cells += box ? `<button aria-label="Toggle ${label}" class="flex">${own}</button>` : own;
      return `<li class="h-[18px] flex items-center whitespace-nowrap ${level === 0 ? "font-bold" : "font-normal"}">${cells}<span class="flex ml-[2px] mr-1">${icon(ic)}</span>${label}</li>`;
    }).join("");

    // ---- materials grid ----
    const letters = ["A", "B", "C", "D", "E", "F", "G", "H", "I"];
    const heads = [["Material", "Description"], ["Modulus of Elasticity", "E [kN/cm<sup class='text-[9px]'>2</sup>]"], ["Shear Modulus", "G [kN/cm<sup class='text-[9px]'>2</sup>]"], ["Poisson's Ratio", "ν [-]"],
      ["Specific Weight", "γ [kN/m<sup class='text-[9px]'>3</sup>]"], ["Coeff. of Th. Exp.", "α [1/°C]"], ["Partial Factor", "γ<sub class='text-[9px]'>M</sub> [-]"], ["Material", "Model"], ["&nbsp;", "Comment"]];
    document.getElementById("grid-head").innerHTML =
      `<tr><th rowspan="2" class="h-[46px] p-0 font-normal align-middle leading-[14px] bg-[#f0f0f0] border-t-2 border-r-2 border-b border-[#6e7178]">Material<br>No.</th>` +
      letters.map((l, i) => `<th class="${i === 0 ? "bg-[#0078d7] text-white" : "bg-[#e1e1e1]"} h-[13px] p-0 leading-[12px] font-normal border-x border-t-2 border-b-2 border-[#6e7178]">${l}</th>`).join("") + `</tr><tr>` +
      heads.map(h => `<th class="h-8 p-0 font-normal whitespace-nowrap overflow-hidden leading-[15px] bg-[#f0f0f0] border border-[#9c9c9c]"><div class="h-4">${h[0]}</div><div class="h-[15px]">${h[1]}</div></th>`).join("") + `</tr>`;
    const first = [`<span class="flex h-[14px]"><i class="w-[13px] bg-[#6666ff] border border-[#444]"></i><span class="flex-1 pl-[2px] border border-dotted border-black leading-[12px]">Steel S 235 | DIN EN 1993-1-1:2010-12</span></span>`,
      "21000.00", "8076.92", "0.300", "78.50", "1.20E-05", "1.00", "Isotropic Linear Elastic", ""];
    let rows = "";
    for (let r = 1; r <= 16; r++) {
      rows += `<tr><th class="${r === 1 ? "bg-[#0078d7] text-white" : "bg-[#e1e1e1]"} h-4 p-0 leading-[14px] font-normal border-r-2 border-b-2 border-[#6e7178]">${r}</th>`;
      for (let c = 0; c < 9; c++) {
        const bg = r === 1 ? "bg-[#ffffc0]" : c === 8 ? "bg-[#f0f0f0]" : "bg-white";
        const align = c > 0 && c < 7 ? "text-right px-1" : c === 0 ? "text-left" : "text-left px-1";
        rows += `<td class="h-4 p-0 leading-[14px] whitespace-nowrap overflow-hidden border border-[#9c9c9c] ${bg} ${align}">${r === 1 ? first[c] : ""}</td>`;
      }
      rows += `</tr>`;
    }
    document.getElementById("grid-body").innerHTML = rows;

    // ---- sheet tabs ----
    document.getElementById("sheet-tabs").innerHTML = ["Lines", "Materials", "Surfaces", "Solids", "Openings", "Nodal Supports", "Line Supports", "Surface Supports", "Line Hinges", "Cross-Sections", "Member Hinges", "Member Eccentricities", "Member Divisions", "Members", "Member Elastic Foundations", "Member Nonlinearities", "Sets of Members", "Intersections", "FE Mesh Refinements"]
      .map(t => `<button role="tab" class="${t === "Materials" ? "bg-[#f8f8f8] border-b-2 px-[5px]" : "bg-[#e1e1e1] border-b pl-[3px] pr-[2px]"} h-[17px] leading-[15px] whitespace-nowrap border-r border-[#6e7178] rounded-b">${t}</button>`).join("");
    document.getElementById("sheet-nav").innerHTML = [["First", "M2 1V9M8 1V9L4 5Z"], ["Previous", "M7 1V9L3 5Z"], ["Next", "M3 1V9L7 5Z"], ["Last", "M2 1V9L6 5ZM8 1V9"]]
      .map(([l, d]) => `<button aria-label="${l} sheet" class="size-4 flex items-center justify-center bg-[#f4f4f4] border border-[#6e7178] border-l-white border-t-white"><svg viewBox="0 0 10 10" class="size-[10px]"><path d="${d}" stroke="#000"/></svg></button>`).join("");

    document.getElementById("status").innerHTML = ["SNAP", "GRID", "CARTES", "OSNAP", "GLINES", "DXF"]
      .map(t => `<button class="px-[2px] border border-t-black border-l-black border-r-white border-b-white leading-4">${t}</button>`).join("");

    // ---- context menus: [icon, label, right part, state] ----
    function renderMenu(id, items) {
      document.getElementById(id).innerHTML = items.map(it => {
        if (!it) return `<li role="separator" class="h-2 flex ml-[1px] mr-[1px]"><span class="w-6 bg-[#e9edf6] border-r border-[#c5c5c5]"></span><span class="flex-1 h-[5px] ml-2 border-b border-[#c5c5c5]"></span></li>`;
        const [ic, label, right, state] = it;
        const box = state === "hot" ? "bg-linear-to-b from-[#fffdf0] from-0% via-[#ffe9a0] via-48% to-[#ffd02e] border-[#d8c070] text-[#474b55]" : state === "off" ? "border-transparent text-[#a6a6a6]" : "border-transparent text-[#474b55]";
        const gutter = state === "hot" ? "w-6 -my-px -ml-px flex items-center pl-1" : "w-6 -my-px -ml-px flex items-center pl-1 bg-[#e9edf6] border-r border-[#c5c5c5]";
        const end = right === ">" ? `<svg viewBox="0 0 4 8" class="w-1 h-2"><path d="M0 0L4 4L0 8Z" fill="#333a46"/></svg>` : `<span class="mr-[10px]">${right || ""}</span>`;
        return `<li role="none" class="px-[1px]"><button role="menuitem" class="w-full h-[22px] flex items-center border rounded-[2px] pr-[2px] ${box}"><span class="h-[22px] shrink-0 ${gutter}">${ic ? icon(ic) : ""}</span><span class="flex-1 text-left pl-[6px] whitespace-nowrap">${label}</span>${end}</button></li>`;
      }).join("");
    }
    renderMenu("context-menu", [
      ["", "Surface (8x)", ">"], ["", "Line (7x)", ">"], ["", "Solid (1x)", ">", "hot"], ["", "Component (4x)", ">"], ["", "Intersection (1x)", ">"], ["", "Node (15x)", ">"], null,
      ["del", "Delete"], null, ["copy", "Copy", "Ctrl+C"], ["insert", "Insert", "Ctrl+V", "off"], null,
      ["move", "Move/Copy..."], ["rotate", "Rotate..."], ["mirror", "Mirror..."], ["project", "Project..."], ["scale", "Scale..."], ["chamfer", "Chamfer..."], null,
      ["gravity", "Center of Gravity and Info..."], null, ["connectY", "Connect Lines/Members"], null, ["display", "Display Properties..."], null,
      ["visible", "Visibility by Selected Objects"], ["visHide", "Visibility by Hiding Selected Objects"], null, ["visUser", "Create New User-Defined Visibility..."]
    ]);
    renderMenu("solid-menu", [["sEdit", "Edit..."], ["sDel", "Delete"], ["sComp", "New Compound Solid...", "", "hot"], null, ["", "FE Mesh Refinement", ">"]]);

    // ---- model view ----
    // Circles are drawn as 32-sided polygons; angle 0 is the back of the disc, clockwise.
    const CX = 1192;
    function ring(cy, rx, ry, from, to) {
      const pt = a => `${(CX + rx * Math.sin(a * Math.PI / 180)).toFixed(1)} ${(cy - ry * Math.cos(a * Math.PI / 180)).toFixed(1)}`;
      const pts = [pt(from)];
      for (let a = Math.ceil((from + 0.100) / 11.25) * 11.25; a < to; a += 11.25) pts.push(pt(a));
      pts.push(pt(to));
      return "M" + pts.join("L");
    }
    const solid = d => `<path d="${d}" fill="none" stroke="#f00" stroke-width="2"/>`;
    const dashDot = (d, w) => `<path d="${d}" fill="none" stroke="#f00" stroke-width="${w || 2.5}" stroke-dasharray="9 4 2 4"/>`;
    const thin = d => `<path d="${d}" fill="none" stroke="#f22" stroke-width="1" stroke-dasharray="9 4"/>`;
    const oval = (x, y, rx, ry, w, dash, rot) => `<ellipse cx="${x}" cy="${y}" rx="${rx}" ry="${ry}" transform="rotate(${rot} ${x} ${y})" fill="none" stroke="#f00" stroke-width="${w}" stroke-dasharray="${dash}"/>`;
    const axes = (x, y) => `<g transform="translate(${x} ${y})" font-family="Liberation Sans" font-size="10" text-anchor="middle">
      <path d="M0 0V-30" stroke="#00f" stroke-width="2"/><path d="M-3-28L0-38L3-28Z" fill="#00c"/><text y="-43" fill="#00f">Z</text>
      <path d="M0 0L30-4" stroke="#0f0" stroke-width="2"/><path d="M28-7L38-5L28-1Z" fill="#00a000"/><text x="47" y="-2" fill="#0f0">Y</text>
      <path d="M0 0L12 10" stroke="#f00" stroke-width="2"/><path d="M9 11L13 6L17 14Z" fill="#b00000"/><text x="20" y="20" fill="#f00">X</text></g>`;
    document.getElementById("model").innerHTML = `<g transform="translate(-338 -101)">` +
      solid(ring(336, 479, 166, 0, 360)) + solid(ring(428, 479, 166, 0, 360)) +
      thin(ring(336, 437, 151, 0, 360)) + thin(ring(428, 437, 151, 0, 360)) +
      dashDot(ring(340.5, 478, 166, -5, 319)) + dashDot(ring(424, 478, 166, -5, 319)) +
      dashDot("M1151 175V258", 3) + dashDot("M877.500 215V298", 3) + solid("M1005.500 183V275") +
      solid("M612 453L776 430") + dashDot("M619 445L736 428") + dashDot("M619 459L732 444L745 482") + dashDot("M732 430L740 413L776 424") +
      oval(632, 464, 14, 37, 3, "9 4 2 4", -8) + oval(624, 455, 12, 28, 1, "8 3", 0) +
      oval(751, 447, 13, 37, 3, "none", -7) + oval(748, 448, 10, 32, 2, "none", -7) + oval(757, 446, 15, 38, 3, "9 4 2 4", -7) + dashDot("M742 436L764 462M744 450L768 480M744 476L762 420") +
      oval(828, 434, 13, 36, 1.5, "none", -6) + oval(825, 434, 10, 32, 1, "6 3", -6) + oval(828, 436, 15, 37, 2, "9 4 2 4", -6) +
      `<path d="M609 452L616 456M620 458L626 464" stroke="#aaa" stroke-width="3"/>` +
      `<circle cx="1420" cy="349" r="2.500" fill="#e00000"/><path d="M1188 336L1195 335" stroke="#999"/>` +
      axes(1192, 428) + axes(393, 636) + `</g>`;
  </script>

</body>
</html>
